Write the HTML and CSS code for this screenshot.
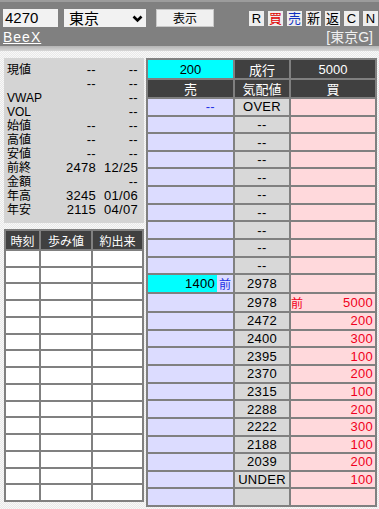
FILE: index.html
```html
<!DOCTYPE html>
<html lang="ja">
<head>
<meta charset="utf-8">
<title>板</title>
<link rel="stylesheet" href="styles.css">
</head>
<body>
<div class="top">
  <div class="row1">
    <div class="code">4270</div>
    <div class="mkt"><span>東京</span><svg class="chev" width="11" height="8" viewBox="0 0 11 8"><path d="M1.5 1.5 L5.5 5.5 L9.5 1.5" fill="none" stroke="#000" stroke-width="2.6"/></svg></div>
    <div class="btn">表示</div>
    <div class="tools">
      <span class="t">R</span><span class="t red">買</span><span class="t blue">売</span><span class="t">新</span><span class="t">返</span><span class="t">C</span><span class="t">N</span>
    </div>
  </div>
  <div class="row2">
    <span class="logo">BeeX</span>
    <span class="exch">[東京G]</span>
  </div>
</div>
<div class="main">
  <div class="left">
    <div class="info">
      <span class="lb">現値</span><span class="v">--</span><span class="v">--</span>
      <span class="lb"></span><span class="v">--</span><span class="v">--</span>
      <span class="lb">VWAP</span><span class="v"></span><span class="v">--</span>
      <span class="lb">VOL</span><span class="v"></span><span class="v">--</span>
      <span class="lb">始値</span><span class="v">--</span><span class="v">--</span>
      <span class="lb">高値</span><span class="v">--</span><span class="v">--</span>
      <span class="lb">安値</span><span class="v">--</span><span class="v">--</span>
      <span class="lb">前終</span><span class="v">2478</span><span class="v">12/25</span>
      <span class="lb">金額</span><span class="v"></span><span class="v">--</span>
      <span class="lb">年高</span><span class="v">3245</span><span class="v">01/06</span>
      <span class="lb">年安</span><span class="v">2115</span><span class="v">04/07</span>
    </div>
    <div class="ticks">
      <div class="th">時刻</div><div class="th">歩み値</div><div class="th">約出来</div>
      <div></div><div></div><div></div>
      <div></div><div></div><div></div>
      <div></div><div></div><div></div>
      <div></div><div></div><div></div>
      <div></div><div></div><div></div>
      <div></div><div></div><div></div>
      <div></div><div></div><div></div>
      <div></div><div></div><div></div>
      <div></div><div></div><div></div>
      <div></div><div></div><div></div>
      <div></div><div></div><div></div>
      <div></div><div></div><div></div>
      <div></div><div></div><div></div>
      <div></div><div></div><div></div>
      <div></div><div></div><div></div>
    </div>
  </div>
  <div class="board">
    <div class="hc cyan">200</div><div class="hc dk">成行</div><div class="hc dk">5000</div>
    <div class="hc dk">売</div><div class="hc dk">気配値</div><div class="hc dk">買</div>

    <div class="s"><span class="q bl">--</span><span class="m"></span></div><div class="p">OVER</div><div class="b"><span class="m"></span><span class="q"></span></div>
    <div class="s"><span class="q"></span><span class="m"></span></div><div class="p">--</div><div class="b"><span class="m"></span><span class="q"></span></div>
    <div class="s"><span class="q"></span><span class="m"></span></div><div class="p">--</div><div class="b"><span class="m"></span><span class="q"></span></div>
    <div class="s"><span class="q"></span><span class="m"></span></div><div class="p">--</div><div class="b"><span class="m"></span><span class="q"></span></div>
    <div class="s"><span class="q"></span><span class="m"></span></div><div class="p">--</div><div class="b"><span class="m"></span><span class="q"></span></div>
    <div class="s"><span class="q"></span><span class="m"></span></div><div class="p">--</div><div class="b"><span class="m"></span><span class="q"></span></div>
    <div class="s"><span class="q"></span><span class="m"></span></div><div class="p">--</div><div class="b"><span class="m"></span><span class="q"></span></div>
    <div class="s"><span class="q"></span><span class="m"></span></div><div class="p">--</div><div class="b"><span class="m"></span><span class="q"></span></div>
    <div class="s"><span class="q"></span><span class="m"></span></div><div class="p">--</div><div class="b"><span class="m"></span><span class="q"></span></div>
    <div class="s"><span class="q"></span><span class="m"></span></div><div class="p">--</div><div class="b"><span class="m"></span><span class="q"></span></div>
    <div class="s"><span class="q cyan">1400</span><span class="m bl">前</span></div><div class="p">2978</div><div class="b"><span class="m"></span><span class="q"></span></div>
    <div class="s"><span class="q"></span><span class="m"></span></div><div class="p">2978</div><div class="b"><span class="m rd">前</span><span class="q rd">5000</span></div>
    <div class="s"><span class="q"></span><span class="m"></span></div><div class="p">2472</div><div class="b"><span class="m"></span><span class="q rd">200</span></div>
    <div class="s"><span class="q"></span><span class="m"></span></div><div class="p">2400</div><div class="b"><span class="m"></span><span class="q rd">300</span></div>
    <div class="s"><span class="q"></span><span class="m"></span></div><div class="p">2395</div><div class="b"><span class="m"></span><span class="q rd">100</span></div>
    <div class="s"><span class="q"></span><span class="m"></span></div><div class="p">2370</div><div class="b"><span class="m"></span><span class="q rd">200</span></div>
    <div class="s"><span class="q"></span><span class="m"></span></div><div class="p">2315</div><div class="b"><span class="m"></span><span class="q rd">100</span></div>
    <div class="s"><span class="q"></span><span class="m"></span></div><div class="p">2288</div><div class="b"><span class="m"></span><span class="q rd">200</span></div>
    <div class="s"><span class="q"></span><span class="m"></span></div><div class="p">2222</div><div class="b"><span class="m"></span><span class="q rd">300</span></div>
    <div class="s"><span class="q"></span><span class="m"></span></div><div class="p">2188</div><div class="b"><span class="m"></span><span class="q rd">100</span></div>
    <div class="s"><span class="q"></span><span class="m"></span></div><div class="p">2039</div><div class="b"><span class="m"></span><span class="q rd">200</span></div>
    <div class="s"><span class="q"></span><span class="m"></span></div><div class="p">UNDER</div><div class="b"><span class="m"></span><span class="q rd">100</span></div>
    <div class="s"><span class="q"></span><span class="m"></span></div><div class="p"></div><div class="b"><span class="m"></span><span class="q"></span></div>
  </div>
</div>
</body>
</html>
```

FILE: styles.css
```css
html, body {
  margin: 0;
  height: 100%;
}
body {
  background: repeating-conic-gradient(#e9e9e9 0 25%, #f8f8f8 0 50%) 0 0 / 2px 2px;
  font-family: "Liberation Sans Narrow", "Liberation Sans", "Noto Sans CJK JP", sans-serif;
  font-size: 13px;
  color: #000;
  overflow: hidden;
}
.top {
  height: 51px;
  box-sizing: border-box;
  padding-top: 9px;
  background: linear-gradient(to bottom, #9c9c9c 0, #9c9c9c 2px, #808080 2px, #808080 46px, #b4b4b4 46px, #d6d6d6 51px);
}
.row1 {
  display: flex;
  align-items: center;
  height: 18px;
  padding-left: 3px;
  padding-right: 1px;
}
.code {
  width: 55px;
  height: 18px;
  box-sizing: border-box;
  padding-left: 2px;
  background: #f2f2f2;
  font-family: "Liberation Sans", sans-serif;
  font-size: 15px;
  line-height: 18px;
}
.mkt {
  margin-left: 6px;
  width: 82px;
  height: 18px;
  box-sizing: border-box;
  padding: 0 3px 0 5px;
  background: #f2f2f2;
  display: flex;
  align-items: center;
  justify-content: space-between;
  font-family: "Noto Sans CJK JP", sans-serif;
  font-size: 15px;
  line-height: 18px;
}
.chev { display: block; margin-top: 1px; }
.btn {
  margin-left: 10px;
  width: 58px;
  height: 18px;
  box-sizing: border-box;
  background: #f0f0f0;
  border: 1px solid #c8c8c8;
  text-align: center;
  font-family: "Noto Sans CJK JP", sans-serif;
  font-size: 12px;
  line-height: 16px;
}
.tools {
  margin-left: auto;
  display: flex;
  gap: 4px;
}
.t {
  width: 15px;
  height: 15px;
  background: #eeeeee;
  text-align: center;
  font-family: "Liberation Sans", "Noto Sans CJK JP", sans-serif;
  font-size: 13px;
  line-height: 15px;
}
.t.red { color: #e00000; }
.t.blue { color: #1030c0; }
.row2 {
  display: flex;
  justify-content: space-between;
  align-items: center;
  height: 15px;
  margin-top: 3px;
  padding: 0 6px 0 3px;
}
.logo {
  color: #fff;
  font-family: "Liberation Sans", sans-serif;
  font-size: 14px;
  letter-spacing: 1px;
  text-decoration: underline;
  line-height: 15px;
}
.exch {
  color: #f0f0f0;
  font-family: "Liberation Sans", "Noto Sans CJK JP", sans-serif;
  font-size: 14px;
  line-height: 15px;
}
.main {
  display: flex;
  gap: 2px;
  padding: 7px 0 0 4px;
}
.left {
  width: 140px;
}
.info {
  height: 165px;
  box-sizing: border-box;
  padding: 5px 6px 6px 3px;
  background: #d4d4d4;
  display: grid;
  grid-template-columns: 40px 49px 42px;
  grid-auto-rows: 14px;
  line-height: 14px;
}
.lb {
  font-size: 12px;
}
.v {
  text-align: right;
  font-size: 13px;
  letter-spacing: 0.3px;
}
.ticks {
  margin-top: 6px;
  height: 273px;
  box-sizing: border-box;
  padding: 2px;
  gap: 2px;
  background: #808080;
  display: grid;
  grid-template-columns: 33px 50px 49px;
  grid-template-rows: 18px repeat(15, 1fr);
}
.ticks > div { background: #fff; }
.ticks > .th {
  background: #404040;
  color: #fff;
  font-family: "Noto Sans CJK JP", sans-serif;
  font-size: 12px;
  display: flex;
  align-items: center;
  justify-content: center;
}
.board {
  width: 231px;
  height: 449px;
  box-sizing: border-box;
  padding: 2px;
  gap: 2px;
  background: #808080;
  display: grid;
  grid-template-columns: 85px 54px 84px;
  grid-template-rows: 18px 17px repeat(23, 1fr);
}
.hc {
  display: flex;
  align-items: center;
  justify-content: center;
  font-size: 13px;
}
.dk { background: #404040; color: #fff; }
.cyan { background: #00ffff; color: #000; }
.s { background: #dcdcff; display: flex; }
.b { background: #ffd9dc; display: flex; }
.p {
  background: #d8d8d8;
  display: flex;
  align-items: center;
  justify-content: center;
  letter-spacing: 0.3px;
}
.q {
  flex: 1;
  display: flex;
  align-items: center;
  justify-content: flex-end;
  padding-right: 2px;
  letter-spacing: 0.3px;
}
.m {
  width: 16px;
  display: flex;
  align-items: center;
  justify-content: center;
  font-family: "Noto Sans CJK JP", sans-serif;
  font-size: 12px;
}
.b .m { justify-content: flex-start; }
.bl { color: #1e32e6; }
.rd { color: #f00020; }
```
